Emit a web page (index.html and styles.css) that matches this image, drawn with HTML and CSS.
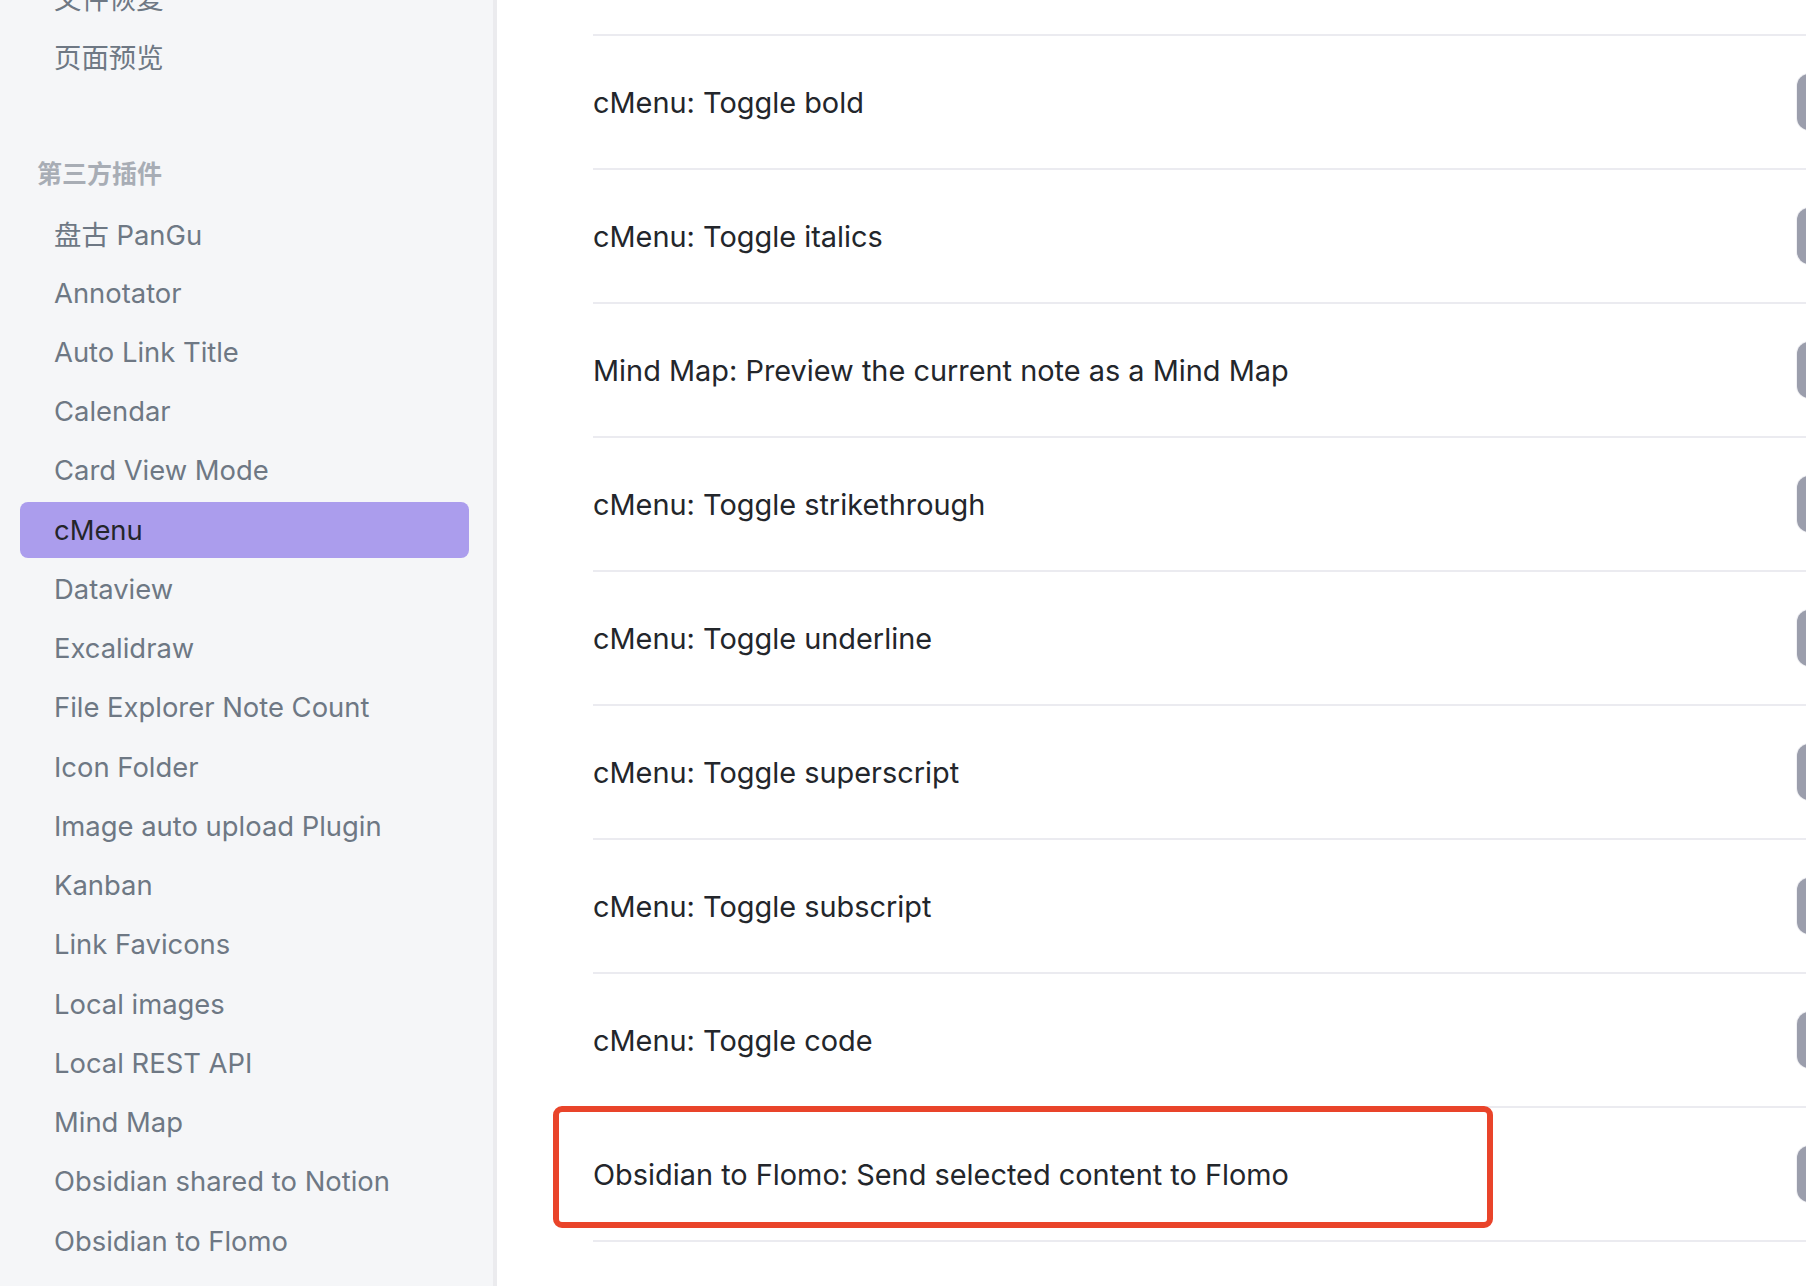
FILE: index.html
```html
<!DOCTYPE html>
<html lang="zh">
<head>
<meta charset="utf-8">
<title>Settings</title>
<link rel="stylesheet" href="styles.css">
</head>
<body>
<div class="app">
  <nav class="sidebar">
    <div class="nav-scroll">
      <div class="nav-item">文件恢复</div>
      <div class="nav-item">页面预览</div>
      <div class="nav-header">第三方插件</div>
      <div class="nav-item">盘古 PanGu</div>
      <div class="nav-item">Annotator</div>
      <div class="nav-item">Auto Link Title</div>
      <div class="nav-item">Calendar</div>
      <div class="nav-item">Card View Mode</div>
      <div class="nav-item active">cMenu</div>
      <div class="nav-item">Dataview</div>
      <div class="nav-item">Excalidraw</div>
      <div class="nav-item">File Explorer Note Count</div>
      <div class="nav-item">Icon Folder</div>
      <div class="nav-item">Image auto upload Plugin</div>
      <div class="nav-item">Kanban</div>
      <div class="nav-item">Link Favicons</div>
      <div class="nav-item">Local images</div>
      <div class="nav-item">Local REST API</div>
      <div class="nav-item">Mind Map</div>
      <div class="nav-item">Obsidian shared to Notion</div>
      <div class="nav-item">Obsidian to Flomo</div>
    </div>
  </nav>
  <main class="content">
    <div class="rows">
      <div class="row"><span class="row-name">cMenu: Toggle bold</span><span class="row-ctl"></span></div>
      <div class="row"><span class="row-name">cMenu: Toggle italics</span><span class="row-ctl"></span></div>
      <div class="row"><span class="row-name">Mind Map: Preview the current note as a Mind Map</span><span class="row-ctl"></span></div>
      <div class="row"><span class="row-name">cMenu: Toggle strikethrough</span><span class="row-ctl"></span></div>
      <div class="row"><span class="row-name">cMenu: Toggle underline</span><span class="row-ctl"></span></div>
      <div class="row"><span class="row-name">cMenu: Toggle superscript</span><span class="row-ctl"></span></div>
      <div class="row"><span class="row-name">cMenu: Toggle subscript</span><span class="row-ctl"></span></div>
      <div class="row"><span class="row-name">cMenu: Toggle code</span><span class="row-ctl"></span></div>
      <div class="row highlighted"><span class="row-name">Obsidian to Flomo: Send selected content to Flomo</span><span class="row-ctl"></span><span class="mark"></span></div>
      <div class="row"><span class="row-name"></span></div>
    </div>
  </main>
</div>
</body>
</html>
```
FILE: styles.css
```css
* { box-sizing: border-box; }
html, body {
  margin: 0;
  padding: 0;
  height: 100%;
  overflow: hidden;
  background: #ffffff;
  font-family: Inter, "Noto Sans CJK SC", "Noto Sans", sans-serif;
}
.app {
  display: flex;
  height: 1286px;
  overflow: hidden;
}
.sidebar {
  width: 497px;
  flex: none;
  background: #f5f6f8;
  border-right: 4px solid #ebebee;
  overflow: hidden;
}
.nav-scroll {
  margin-top: -31px;
  padding: 0 24px 0 20px;
}
.nav-item {
  height: 56px;
  margin-bottom: 3.25px;
  padding-left: 34px;
  display: flex;
  align-items: center;
  font-size: 27.4px;
  color: #6e7884;
  border-radius: 8px;
  white-space: nowrap;
}
.nav-item.active {
  background: #ab9ded;
  color: #24252a;
}
.nav-header {
  height: 40px;
  margin-top: 68px;
  margin-bottom: 13px;
  margin-left: 17px;
  display: flex;
  align-items: center;
  font-size: 25px;
  font-weight: 600;
  color: #a8adb5;
}
.content {
  flex: 1;
  min-width: 0;
  overflow: hidden;
}
.rows {
  padding-top: 34px;
  padding-left: 96px;
}
.row {
  position: relative;
  height: 134px;
  border-top: 2px solid #ebebf0;
  display: flex;
  align-items: center;
  justify-content: space-between;
}
.row-name {
  font-size: 28.9px;
  color: #23262b;
  white-space: nowrap;
}
.row-ctl {
  width: 90px;
  height: 56px;
  margin-right: -90px;
  flex: none;
  background: #9b9eac;
  border-radius: 12px;
  box-shadow: 0 0 0 1px #f1f1f4;
  position: relative;
  left: -9px;
}
.mark {
  position: absolute;
  left: -40px;
  top: -2px;
  width: 940px;
  height: 122px;
  border: 6px solid #e9442a;
  border-radius: 9px;
}
```
